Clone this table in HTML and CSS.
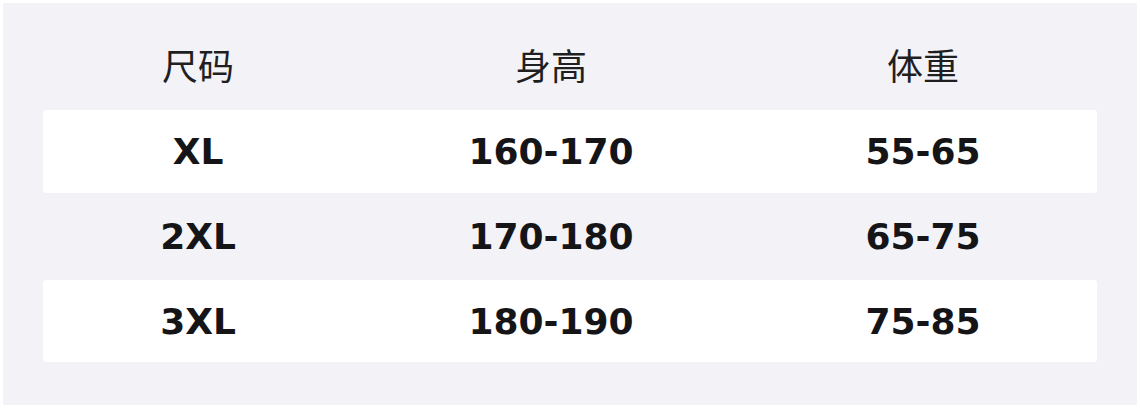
FILE: index.html
```html
<!DOCTYPE html>
<html lang="zh">
<head>
<meta charset="utf-8">
<link rel="stylesheet" href="styles.css">
</head>
<body>
<div class="panel">
  <div class="row head">
    <div class="cell">尺码</div>
    <div class="cell">身高</div>
    <div class="cell">体重</div>
  </div>
  <div class="row r1 white">
    <div class="cell">XL</div>
    <div class="cell">160-170</div>
    <div class="cell">55-65</div>
  </div>
  <div class="row r2">
    <div class="cell">2XL</div>
    <div class="cell">170-180</div>
    <div class="cell">65-75</div>
  </div>
  <div class="row r3 white">
    <div class="cell">3XL</div>
    <div class="cell">180-190</div>
    <div class="cell">75-85</div>
  </div>
</div>
</body>
</html>
```
FILE: styles.css
```css
html, body {
  margin: 0;
  padding: 0;
  background: #ffffff;
}
body {
  padding: 3px;
  font-family: "DejaVu Sans", "Noto Sans CJK SC", sans-serif;
}
.panel {
  width: 1134px;
  height: 402px;
  box-sizing: border-box;
  background: #f2f2f7;
  padding: 0 40px;
  display: flex;
  flex-direction: column;
}
.row {
  display: grid;
  grid-template-columns: 310px 396px 348px;
  align-items: center;
}
.cell {
  text-align: center;
}
.head {
  height: 107px;
  padding-top: 15px;
  box-sizing: border-box;
  font-family: "Noto Sans CJK SC", sans-serif;
  font-size: 36px;
  color: #1f1f22;
  font-weight: 400;
}
.r1, .r2, .r3 {
  font-size: 36px;
  font-weight: 700;
  color: #151518;
}
.r1 { height: 83px; }
.r2 { height: 87px; }
.r3 { height: 82px; }
.white {
  background: #ffffff;
  border-radius: 3px;
}
```
